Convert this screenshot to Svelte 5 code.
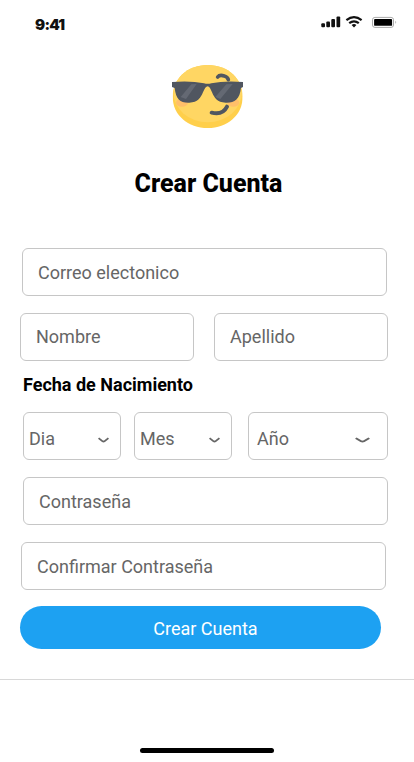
<script>
  const parts = [
    { label: 'Dia', kind: 'day' },
    { label: 'Mes', kind: 'month' },
    { label: 'Año', kind: 'year' }
  ];
</script>

<main class="screen">
  <header class="status">
    <span class="time">9:41</span>
    <svg class="signal" width="76" height="14" viewBox="0 0 76 14" aria-hidden="true">
      <g fill="#111">
        <rect x="0.3" y="8.3" width="3.7" height="3.9" rx="1" />
        <rect x="5.3" y="6.5" width="3.7" height="5.7" rx="1" />
        <rect x="10.3" y="4" width="3.7" height="8.2" rx="1" />
        <rect x="15.5" y="1.4" width="3.7" height="10.8" rx="1" />
      </g>
      <g fill="none" stroke="#111" stroke-width="2.2">
        <path d="M25.4 5.1Q33 -0.9 40.6 5.1" />
        <path d="M28.2 8.2Q33 4.4 37.8 8.2" />
      </g>
      <path d="M30.6 10Q33 8.2 35.4 10L33 12.5Z" fill="#111" />
      <rect x="51.5" y="2.4" width="21" height="10" rx="2.4" fill="none" stroke="#aaa" />
      <rect x="53.1" y="4" width="18" height="6.8" rx="0.9" fill="#000" />
      <path d="M74.3 5.8q1.8 1.5 0 3z" fill="#aaa" />
    </svg>
  </header>

  <svg class="emoji" width="72" height="64" viewBox="36 30 216 192" aria-hidden="true">
    <defs>
      <clipPath id="face">
        <path d="M143 30C205 30 248 72 248 125C248 180 202 219 143 219C84 219 38 180 38 125C38 72 81 30 143 30Z" />
      </clipPath>
    </defs>
    <g clip-path="url(#face)">
      <rect x="36" y="30" width="214" height="190" fill="#ffcf4b" />
      <ellipse cx="143" cy="111" rx="103" ry="91" fill="#ffd663" />
      <ellipse cx="66" cy="143" rx="18" ry="12" fill="#ffbf6a" />
      <ellipse cx="220" cy="143" rx="18" ry="12" fill="#ffbf6a" />
    </g>
    <path d="M36 81Q91 76 132 85Q143 88 154 85Q195 76 249 81V96L243 99C239 134 223 144 197 143C171 142 164 130 156 112C151 101 148 94 143 94C138 94 134 101 129 112C121 130 114 142 88 143C61 144 48 134 44 99L36 96Z" fill="#505660" />
    <path d="M94 88L110 87L78 132L62 126ZM199 88L218 87L181 132L166 126Z" fill="#646973" />
    <path d="M173 66Q179 58 193 63Q202 65 205 74" fill="none" stroke="#505660" stroke-width="11" stroke-linecap="round" />
    <path d="M155 173Q188 181 201 155" fill="none" stroke="#505660" stroke-width="12" stroke-linecap="round" />
  </svg>

  <h1>Crear Cuenta</h1>

  <form>
    <div class="field email">Correo electonico</div>
    <div class="names">
      <div class="field">Nombre</div>
      <div class="field">Apellido</div>
    </div>
    <h2>Fecha de Nacimiento</h2>
    <div class="dates">
      {#each parts as part}
        <div class="field select {part.kind}">
          <span>{part.label}</span>
          <svg viewBox="0 0 10 6" preserveAspectRatio="none" aria-hidden="true">
            <path d="M0.5 1.1L4.2 4.3Q5 4.9 5.8 4.3L9.5 1.1" fill="none" stroke="#666" stroke-width="1.7" />
          </svg>
        </div>
      {/each}
    </div>
    <div class="field password">Contraseña</div>
    <div class="field confirm">Confirmar Contraseña</div>
    <button type="button">Crear Cuenta</button>
  </form>

  <footer><div class="home"></div></footer>
</main>

<style>
  :global(body) { background: #fff; }
  .screen {
    box-sizing: border-box;
    width: 414px;
    height: 762px;
    overflow: hidden;
    display: flex;
    flex-direction: column;
    background: #fff;
    color: #000;
    font-family: Roboto, sans-serif;
  }
  .status {
    box-sizing: border-box;
    height: 65px;
    padding: 15px 17px 0 35px;
    display: flex;
    justify-content: space-between;
    align-items: flex-start;
  }
  .time {
    font: 900 15px/20px Inter, sans-serif;
    letter-spacing: -0.7px;
    color: #111;
  }
  .signal { display: block; }
  .emoji { display: block; flex: none; margin-left: 172px; }
  h1 {
    margin: 40px 0 0 3px;
    font-size: 25px;
    line-height: 30px;
    font-weight: 800;
    text-align: center;
    height: 79px;
    flex: none;
  }
  form { display: flex; flex-direction: column; flex: none; width: 414px; }
  .field {
    box-sizing: border-box;
    height: 48px;
    border: 1px solid #c6c6c6;
    border-radius: 6px;
    padding-left: 15px;
    font-size: 18px;
    line-height: 47px;
    color: #666;
    white-space: nowrap;
  }
  .email { width: 365px; margin-left: 22px; }
  .names { display: flex; gap: 20px; margin: 17px 0 0 20px; }
  .names .field { width: 174px; line-height: 45px; }
  h2 {
    margin: 12px 0 0 23px;
    height: 39px;
    font-size: 18px;
    line-height: 24px;
    font-weight: 700;
  }
  .dates { display: flex; margin-left: 23px; }
  .select {
    width: 98px;
    display: flex;
    align-items: center;
    justify-content: space-between;
    padding: 5px 11px 0 5px;
  }
  .select svg { width: 11px; height: 6px; margin-top: 3px; }
  .month { margin-left: 13px; }
  .year { width: 140px; margin-left: 16px; padding-left: 8px; padding-right: 17px; }
  .year svg { width: 15px; }
  .password { width: 365px; margin: 17px 0 0 23px; }
  .confirm { width: 365px; margin: 17px 0 0 21px; }
  button {
    width: 361px;
    height: 43px;
    margin: 16px 0 0 20px;
    padding: 1px 0 0 10px;
    border: 0;
    border-radius: 22px;
    background: #1da1f2;
    color: #fff;
    font: 400 18px Roboto, sans-serif;
  }
  footer {
    margin-top: 30px;
    flex: 1;
    border-top: 1px solid #d8d8d8;
    display: flex;
    justify-content: center;
    align-items: flex-end;
    padding-bottom: 9px;
  }
  .home { width: 134px; height: 5px; border-radius: 3px; background: #000; }
</style>
